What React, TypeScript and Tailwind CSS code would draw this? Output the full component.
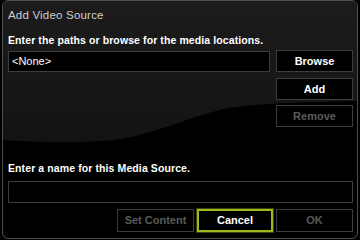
import React from "react";

const btn =
  "h-[22px] border border-[#3d3d3d] bg-black flex items-center justify-center text-[11px] font-bold leading-none";

export default function App() {
  return (
    <div className="w-[360px] h-[240px] bg-black overflow-hidden [font-family:'Liberation_Sans',Arial,sans-serif]">
      <div className="relative ml-[2px] w-[356px] h-[239px] rounded-[6px] border border-[#4e4e4e] overflow-hidden bg-black">
        <svg className="absolute left-0 top-0" width="356" height="239" viewBox="0 0 356 239">
          <defs>
            <linearGradient id="g" x1="0" y1="0" x2="0" y2="1">
              <stop offset="0" stopColor="#1c1c1c" />
              <stop offset="1" stopColor="#131313" />
            </linearGradient>
          </defs>
          <path
            d="M0 0 H356 V100 C320 101 260 101 220 108 C180 118 150 134 110 139 C70 143 30 141 0 139 Z"
            fill="url(#g)"
          />
        </svg>
        <div className="relative pl-[5px] pr-[4px] pt-[7px]">
          <div className="text-[11.5px] leading-[14px] text-[#cfcfcf] tracking-[0.2px]">Add Video Source</div>
          <div className="mt-[12px] text-[10.5px] leading-[13px] font-bold text-white tracking-[0.1px]">
            Enter the paths or browse for the media locations.
          </div>
          <div className="mt-[3px] flex gap-[6px] items-start">
            <div className="mt-[1px] w-[262px] h-[21px] border border-[#3d3d3d] bg-black flex items-center pl-[3px] text-[11px] text-white">
              &lt;None&gt;
            </div>
            <div className="flex flex-col w-[77px]">
              <div className={btn + " text-white"}>Browse</div>
              <div className={btn + " mt-[6px] text-white"}>Add</div>
              <div className={btn + " mt-[5px] text-[#5a5a5a]"}>Remove</div>
            </div>
          </div>
          <div className="mt-[35px] text-[10.5px] leading-[13px] font-bold text-white tracking-[0.1px]">
            Enter a name for this Media Source.
          </div>
          <div className="mt-[6px] w-[345px] h-[22px] border border-[#3d3d3d] bg-black" />
          <div className="mt-[6px] flex justify-end">
            <div className={btn + " w-[77px] h-[23px] text-[#5a5a5a]"}>Set Content</div>
            <div className="ml-[3px] w-[76px] h-[23px] border-2 border-[#a3b51f] shadow-[0_0_0_1px_#3c440c] bg-black flex items-center justify-center text-[11px] font-bold leading-none text-white">
              Cancel
            </div>
            <div className={btn + " ml-[3px] w-[77px] h-[23px] text-[#5a5a5a]"}>OK</div>
          </div>
        </div>
      </div>
    </div>
  );
}
